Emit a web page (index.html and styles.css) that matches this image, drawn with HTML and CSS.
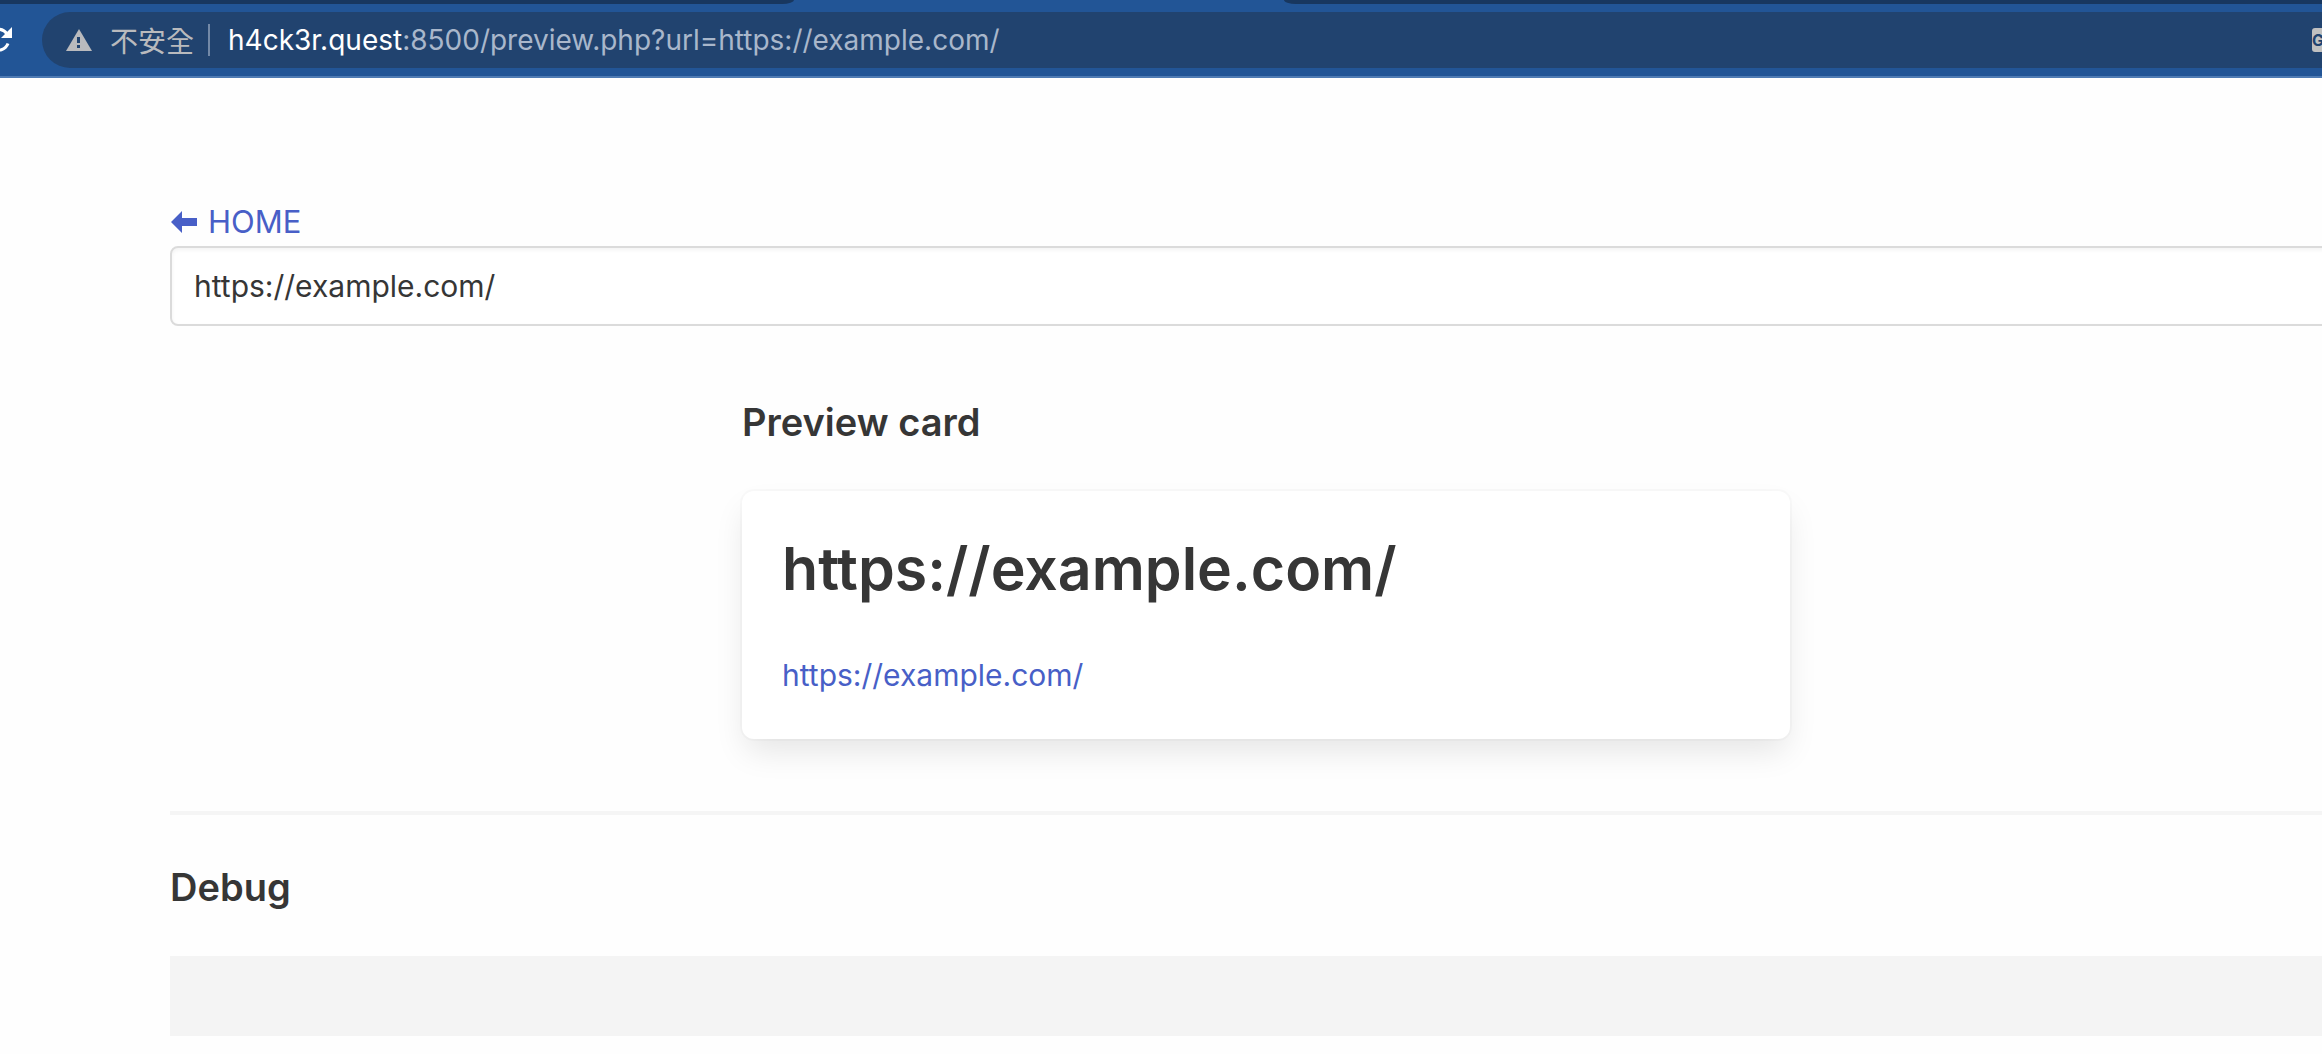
FILE: index.html
```html
<!DOCTYPE html>
<html lang="zh-Hant">
<head>
<meta charset="utf-8">
<meta name="viewport" content="width=device-width, initial-scale=1">
<title>Preview card</title>
<link rel="stylesheet" href="styles.css">
</head>
<body>
<header class="browser">
  <div class="tabs">
    <div class="tab-strip tab-strip-left"></div>
    <div class="tab-strip tab-strip-right"></div>
  </div>
  <div class="toolbar">
    <button class="reload" type="button" aria-label="Reload">
      <svg viewBox="0 0 26 28" width="26" height="28" aria-hidden="true">
        <path d="M22 17.500A10.500 10.500 0 1 1 21 8" fill="none" stroke="#fff" stroke-width="3"/>
        <path d="M26 1v11H15z" fill="#fff"/>
      </svg>
    </button>
    <div class="omnibox">
      <svg class="warning" viewBox="0 0 26 22" width="26" height="22" aria-hidden="true">
        <path d="M13 0L26 22H0z" fill="#b9babd"/>
        <path d="M11 8h3v6h-3zM11 16h3v3h-3z" fill="#21436f"/>
      </svg>
      <span class="security">不安全</span>
      <span class="divider"></span>
      <span class="url"><span class="host">h4ck3r.quest</span>:8500/preview.php?url=https://example.com/</span>
      <button class="translate" type="button" aria-label="Translate">G</button>
    </div>
  </div>
</header>
<main class="section">
  <a class="home" href="#">
    <svg viewBox="0 0 28 22" width="28" height="22" aria-hidden="true">
      <path d="M1 11L12 0v7h15v8H12v7z" fill="#485fc7"/>
    </svg>
    HOME</a>
  <input class="input" type="text" aria-label="URL" value="https://example.com/">
  <section class="preview">
    <h2 class="heading">Preview card</h2>
    <article class="card">
      <h1 class="card-title">https://example.com/</h1>
      <a class="card-link" href="#">https://example.com/</a>
    </article>
  </section>
  <hr class="rule">
  <h2 class="heading">Debug</h2>
  <pre class="debug"></pre>
</main>
</body>
</html>
```

FILE: styles.css
```css
* {
  box-sizing: border-box;
}

body {
  margin: 0;
  overflow-x: hidden;
  background: #fefefe;
  color: #363636;
  font-family: Inter, "Noto Sans CJK TC", sans-serif;
  font-size: 30px;
  line-height: 48px;
}

a {
  color: #485fc7;
  text-decoration: none;
}

button {
  border: 0;
  padding: 0;
  font-family: inherit;
}

/* Browser chrome */
.browser {
  background: #225596;
  border-bottom: 2px solid #4f7bb3;
  overflow: hidden;
}

.tabs {
  display: flex;
  justify-content: space-between;
  height: 4px;
}

.tab-strip {
  background: #18375f;
}

.tab-strip-left {
  width: 34.2%;
  border-bottom-right-radius: 12px 4px;
}

.tab-strip-right {
  width: 44.7%;
  border-bottom-left-radius: 12px 4px;
}

.toolbar {
  display: flex;
  align-items: center;
  gap: 30px;
  height: 72px;
  margin-left: -14px;
}

.reload {
  flex: none;
  display: flex;
  background: none;
}

.omnibox {
  flex: 1;
  display: flex;
  align-items: center;
  height: 56px;
  margin-right: -60px;
  padding: 0 46px 0 24px;
  border-radius: 28px;
  background: #21436f;
  color: #a9b7cb;
  font-size: 28px;
  white-space: nowrap;
}

.security {
  margin-left: 18px;
  color: #b9babd;
  font-family: "Noto Sans CJK TC", sans-serif;
}

.divider {
  width: 2px;
  height: 32px;
  margin: 0 18px 0 14px;
  background: #7389a7;
}

.host {
  color: #fff;
}

.translate {
  width: 24px;
  height: 24px;
  margin-left: auto;
  border-radius: 3px;
  background: #c0c0c0;
  color: #21436f;
  font-size: 16px;
  font-weight: 700;
  text-align: left;
}

/* Page */
.section {
  margin-right: -40px;
  padding: 120px 0 18px 170px;
}

.home {
  display: flex;
  align-items: center;
  gap: 10px;
  font-size: 31px;
}

.input {
  display: block;
  width: 100%;
  height: 80px;
  padding: 0 22px;
  border: 2px solid #dbdbdb;
  border-radius: 8px;
  background: #fff;
  box-shadow: inset 0 2px 4px rgba(10, 10, 10, 0.05);
  color: #363636;
  font: inherit;
}

.preview {
  width: calc(50% - 48px);
  margin: 72px auto;
}

.heading {
  margin: 0;
  font-size: 38px;
  font-weight: 600;
  line-height: 48px;
}

.card {
  margin-top: 45px;
  padding: 40px;
  border-radius: 12px;
  background: #fff;
  box-shadow: 0 16px 32px -4px rgba(10, 10, 10, 0.1), 0 0 0 2px rgba(10, 10, 10, 0.02);
}

.card-title {
  margin: 0 0 44px;
  font-size: 59px;
  font-weight: 600;
  line-height: 76px;
}

.card-link {
  display: block;
}

.rule {
  height: 4px;
  margin: 0 0 48px;
  border: 0;
  background: #f5f5f5;
}

.debug {
  height: 80px;
  margin: 45px 0 0;
  background: #f4f4f4;
}
```
